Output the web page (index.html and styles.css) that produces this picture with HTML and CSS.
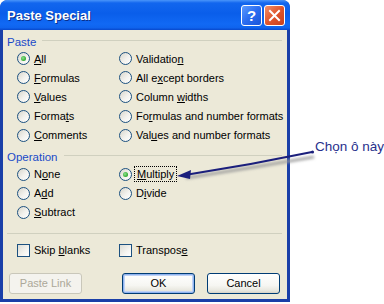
FILE: index.html
```html
<!DOCTYPE html>
<html>
<head>
<meta charset="utf-8">
<link rel="stylesheet" href="styles.css">
</head>
<body>
<div class="stage">
  <div class="window">
    <div class="titlebar">
      <span class="title">Paste Special</span>
      <span class="tbtns">
        <span class="tbtn help">?</span>
        <span class="tbtn close">
          <svg width="13" height="13" viewBox="0 0 13 13"><path d="M2 2 L11 11 M11 2 L2 11" stroke="#fff" stroke-width="2" stroke-linecap="square"/></svg>
        </span>
      </span>
    </div>
    <div class="client">
      <div class="legend paste"><span>Paste</span><span class="rule"></span></div>
      <div class="grid">
        <div class="opt"><span class="radio on"></span><span><u>A</u>ll</span></div>
        <div class="opt"><span class="radio"></span><span>Validatio<u>n</u></span></div>
        <div class="opt"><span class="radio"></span><span><u>F</u>ormulas</span></div>
        <div class="opt"><span class="radio"></span><span>All e<u>x</u>cept borders</span></div>
        <div class="opt"><span class="radio"></span><span><u>V</u>alues</span></div>
        <div class="opt"><span class="radio"></span><span>Column <u>w</u>idths</span></div>
        <div class="opt"><span class="radio"></span><span>Forma<u>t</u>s</span></div>
        <div class="opt"><span class="radio"></span><span>Fo<u>r</u>mulas and number formats</span></div>
        <div class="opt"><span class="radio"></span><span><u>C</u>omments</span></div>
        <div class="opt"><span class="radio"></span><span>Val<u>u</u>es and number formats</span></div>
      </div>
      <div class="legend op"><span>Operation</span><span class="rule"></span></div>
      <div class="grid">
        <div class="opt"><span class="radio"></span><span>N<u>o</u>ne</span></div>
        <div class="opt"><span class="radio on"></span><span class="focus"><u>M</u>ultiply</span></div>
        <div class="opt"><span class="radio"></span><span>A<u>d</u>d</span></div>
        <div class="opt"><span class="radio"></span><span>D<u>i</u>vide</span></div>
        <div class="opt"><span class="radio"></span><span><u>S</u>ubtract</span></div>
      </div>
      <div class="sep"></div>
      <div class="grid checks">
        <div class="opt"><span class="check"></span><span>Skip <u>b</u>lanks</span></div>
        <div class="opt"><span class="check"></span><span>Transpos<u>e</u></span></div>
      </div>
      <div class="buttons">
        <span class="btn disabled">Paste Link</span>
        <span class="spacer"></span>
        <span class="btn default">OK</span>
        <span class="btn">Cancel</span>
      </div>
    </div>
  </div>
  <div class="note">Chọn ô này</div>
  <svg class="arrow" width="384" height="304" viewBox="0 0 384 304">
    <defs>
      <filter id="blur" x="-10%" y="-50%" width="120%" height="200%"><feGaussianBlur stdDeviation="1.5"/></filter>
    </defs>
    <path d="M186 178 Q250 168 314 157" stroke="#9a9a9a" stroke-width="2.5" fill="none" filter="url(#blur)"/>
    <path d="M188 174.5 Q250 165 312 152" stroke="#1b1f7c" stroke-width="2" fill="none"/>
    <path d="M177 176 L191 170 L190 179 Z" fill="#1b1f7c"/>
    <circle cx="312.5" cy="152" r="1.6" fill="#1b1f7c"/>
  </svg>
</div>
</body>
</html>
```
FILE: styles.css
```css
html, body {
  margin: 0;
  padding: 0;
  background: #fff;
}
.stage {
  position: relative;
  width: 384px;
  height: 304px;
  overflow: hidden;
}
.window {
  width: 290px;
  height: 302px;
  display: flex;
  flex-direction: column;
  background: #1a3fa8;
  border-radius: 8px 8px 0 0;
  font-family: "Liberation Sans", Arial, sans-serif;
  font-size: 11px;
  color: #000;
}
.titlebar {
  height: 30px;
  flex: none;
  display: flex;
  align-items: center;
  padding: 0 5px 0 7px;
  border-radius: 7px 7px 0 0;
  background: linear-gradient(to bottom, #4a95fa 0, #1266ee 10%, #0a5eea 45%, #1169f4 80%, #0f64ee 92%, #0848cc 100%);
}
.title {
  color: #fff;
  font-weight: bold;
  font-size: 13px;
  text-shadow: 1px 1px 0 #0a2f8a;
}
.tbtns {
  margin-left: auto;
  display: flex;
  gap: 2px;
}
.tbtn {
  width: 19px;
  height: 19px;
  border: 1px solid #fff;
  border-radius: 3px;
  display: flex;
  align-items: center;
  justify-content: center;
  color: #fff;
  font-weight: bold;
  font-size: 15px;
}
.help {
  background: linear-gradient(135deg, #5b9bff 0, #2a6cf0 50%, #1a55d8 100%);
}
.close {
  background: linear-gradient(135deg, #f0906a 0, #e0552c 50%, #c8401e 100%);
}
.client {
  flex: 1;
  margin: 0 3px 3px 3px;
  background: #ece9d8;
  display: flex;
  flex-direction: column;
}
.legend {
  display: flex;
  align-items: center;
  height: 13px;
  padding: 0 5px 0 4px;
  color: #1a49c8;
  font-size: 11.5px;
}
.legend.paste {
  margin-top: 5px;
}
.legend.op {
  margin-top: 5.5px;
}
.rule {
  flex: 1;
  height: 1px;
  background: #d0d0bf;
  margin-left: 6px;
  margin-top: -2px;
}
.grid {
  display: grid;
  grid-template-columns: 102px 1fr;
  grid-auto-rows: 19.2px;
  padding-left: 14px;
  margin-top: 1px;
}
.opt {
  display: flex;
  align-items: center;
  gap: 4px;
  white-space: nowrap;
}
.radio {
  width: 11px;
  height: 11px;
  border: 1px solid #1c5180;
  border-radius: 50%;
  background: linear-gradient(135deg, #d8d6cc 0, #f3f2ee 55%, #fff 100%);
  display: flex;
  align-items: center;
  justify-content: center;
  flex: none;
}
.radio.on::after {
  content: "";
  width: 5px;
  height: 5px;
  border-radius: 50%;
  background: radial-gradient(circle at 40% 40%, #8ee28e 0, #2fa82f 70%, #1f8a1f 100%);
}
.focus {
  outline: 1px dotted #000;
  outline-offset: 1px;
  padding: 0 1px;
}
.sep {
  height: 1px;
  background: #d0d0bf;
  margin: 11px 5px 0 4px;
}
.checks {
  margin-top: 6.5px;
}
.check {
  width: 11px;
  height: 11px;
  border: 1px solid #1c5180;
  background: linear-gradient(135deg, #dcdcd5 0, #f5f4f0 60%, #fff 100%);
  flex: none;
}
.buttons {
  display: flex;
  padding: 0 7px 0 6px;
  margin-top: 13px;
  gap: 12px;
}
.spacer {
  flex: 1;
}
.btn {
  width: 71px;
  height: 19px;
  border: 1px solid #003c74;
  border-radius: 3px;
  background: linear-gradient(to bottom, #fff 0, #f6f6f2 60%, #e6e5dc 90%, #d6d0c5 100%);
  display: flex;
  align-items: center;
  justify-content: center;
  box-sizing: content-box;
}
.btn.default {
  box-shadow: inset 0 0 0 1px #8fb3f0, inset 0 0 0 2px #c0d3f5;
}
.btn.disabled {
  border-color: #c9c7ba;
  color: #aca899;
  background: #f4f3ee;
}
.note {
  position: absolute;
  left: 315px;
  top: 139px;
  font-family: "Liberation Sans", Arial, sans-serif;
  font-size: 13.5px;
  color: #27308c;
  white-space: nowrap;
}
.arrow {
  position: absolute;
  left: 0;
  top: 0;
  pointer-events: none;
}
```
